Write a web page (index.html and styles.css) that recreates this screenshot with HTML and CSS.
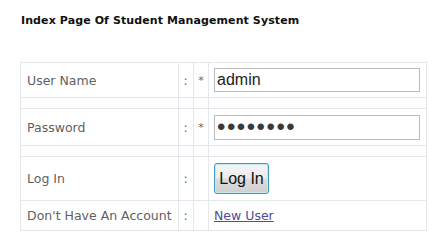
FILE: index.html
```html
<!DOCTYPE html>
<html lang="en">
<head>
  <meta charset="UTF-8">
  <title>Index Page Of Student Management System</title>
  <link rel="stylesheet" href="styles.css">
</head>
<body>
  <h1 class="page-title">Index Page Of Student Management System</h1>

  <form class="login-form" onsubmit="return false;">
    <table class="login-table">
      <tr class="row-user">
        <td class="label">User Name</td>
        <td class="colon">:</td>
        <td class="star">*</td>
        <td class="field"><input type="text" class="text-box" value="admin"></td>
      </tr>
      <tr class="spacer"><td></td><td></td><td></td><td></td></tr>
      <tr class="row-pass">
        <td class="label">Password</td>
        <td class="colon">:</td>
        <td class="star">*</td>
        <td class="field"><input type="password" class="text-box pass-box" value="12345678"></td>
      </tr>
      <tr class="spacer"><td></td><td></td><td></td><td></td></tr>
      <tr class="row-login">
        <td class="label">Log In</td>
        <td class="colon">:</td>
        <td class="star"></td>
        <td class="field"><button type="submit" class="login-btn">Log In</button></td>
      </tr>
      <tr class="row-new">
        <td class="label">Don't Have An Account</td>
        <td class="colon">:</td>
        <td class="star"></td>
        <td class="field"><a href="#" class="new-user">New User</a></td>
      </tr>
    </table>
  </form>
</body>
</html>
```

FILE: styles.css
```css
body {
  margin: 0;
  padding: 0 20px;
  background-color: #fff;
  font-family: "DejaVu Sans", Verdana, sans-serif;
  color: #5f5f5f;
}
.page-title {
  font-size: 11px;
  font-weight: bold;
  color: #111;
  margin: 0;
  padding: 14px 0 0 1px;
  line-height: 13px;
  letter-spacing: 0.1px;
}
.login-form {
  margin-top: 35px;
}
.login-table {
  border-collapse: collapse;
  width: 407px;
  font-size: 12.5px;
}
.login-table td {
  border: 1px solid #e4e8ec;
  padding: 0 6px;
  vertical-align: middle;
}
.login-table .label {
  width: 144px;
  white-space: nowrap;
}
.login-table .colon,
.login-table .star {
  width: 15px;
  padding: 0;
  text-align: center;
  color: #666;
}
.login-table .field {
  padding-left: 5px;
}
.row-user { height: 35px; }
.row-pass { height: 37px; }
.row-login { height: 44px; }
.row-new { height: 30px; }
.spacer { height: 11px; }
.login-table .star {
  font-size: 11px;
}
.text-box {
  display: block;
  box-sizing: border-box;
  width: 206px;
  height: 24px;
  margin: 0;
  padding: 0 2px;
  border: 1px solid #bcbcbc;
  font-family: "Liberation Sans", Arial, sans-serif;
  font-size: 16px;
  color: #222;
  background: #fff;
  outline: none;
}
.pass-box {
  height: 25px;
  font-size: 24px;
  color: #3a3a3a;
  letter-spacing: 1.5px;
}
.login-btn {
  display: block;
  box-sizing: border-box;
  width: 55px;
  height: 31px;
  margin: 0;
  padding: 0;
  border: 1px solid #3a9cc0;
  border-radius: 3px;
  background: linear-gradient(#f6f6f6 0%, #ebebeb 48%, #dcdcdc 52%, #cfcfcf 100%);
  box-shadow: inset 0 0 0 1px #c5e8f3;
  font-family: "Liberation Sans", Arial, sans-serif;
  font-size: 16px;
  color: #111;
  cursor: pointer;
}
.new-user {
  color: #4d4d9b;
  text-decoration: underline;
}
```
